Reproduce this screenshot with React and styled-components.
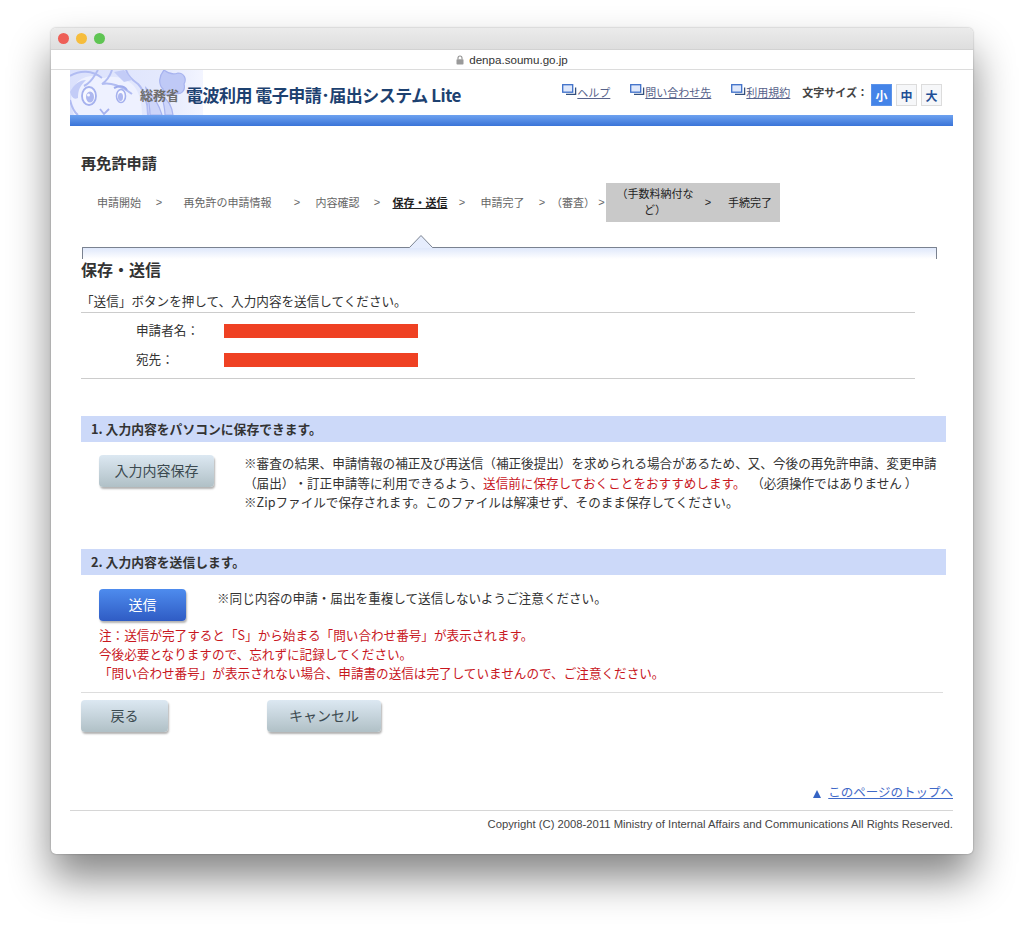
import React from 'react';
import styled, { createGlobalStyle } from 'styled-components';

const FONT = '"Noto Sans CJK JP", "Liberation Sans", sans-serif';

const GlobalStyle = createGlobalStyle`
    html, body {
        margin: 0;
        padding: 0;
        background: #fff;
    }
    body {
        font-family: ${FONT};
        color: #333;
        text-spacing-trim: space-all;
    }
`;

const steps = [
    { label: '申請開始', width: 62, sep: 18 },
    { label: '再免許の申請情報', width: 119, sep: 20 },
    { label: '内容確認', width: 61, sep: 18 },
    { label: '保存・送信', width: 68, sep: 16, current: true },
    { label: '申請完了', width: 65, sep: 14 },
    { label: '（審査）', width: 48, sep: 9 },
];

function LinkIcon() {
    return (
        <svg width="15" height="12" viewBox="0 0 15 12" fill="none">
            <rect x="0.7" y="0.7" width="10" height="7.500" fill="#dfe8fb" stroke="#3e6fc9" strokeWidth="1.3" />
            <path d="M4 10.400h9.600V3.400" stroke="#33507f" strokeWidth="1.3" />
        </svg>
    );
}

function LogoArt() {
    return (
        <LogoSvg viewBox="0 0 133 45" fill="none">
            <defs>
                <linearGradient id="logoBg" x1="0" x2="1" y1="0" y2="0">
                    <stop offset="0" stopColor="#dbe1fc" />
                    <stop offset="0.7" stopColor="#e4e9fd" />
                    <stop offset="1" stopColor="#f3f5ff" />
                </linearGradient>
            </defs>
            <rect width="133" height="45" fill="url(#logoBg)" />
            <path d="M4 45C0 34 0 22 6 14 12 6 24 4 34 8c10-3 22 0 30 8 6 8 8 18 8 29z" fill="#eef1ff" />
            <path d="M0 6c10-6 22-6 32 2M28 0c-4 6-6 12-14 16M42 0c-2 6-4 10-10 14 8-2 20 2 30 10M56 0c2 6 6 10 12 14 6 6 10 18 10 31M0 30c2 8 4 12 8 15" stroke="#b1bcf2" strokeWidth="2" />
            <path d="M0 22c4-8 10-12 16-12-6 6-8 10-8 18-4 2-6 0-8-6zM44 2l10-2 8 10-8 2z" fill="#c3ccf7" />
            <ellipse cx="19" cy="26" rx="7" ry="9" fill="#f7f8ff" stroke="#a5b1ee" strokeWidth="1.8" />
            <ellipse cx="20" cy="27" rx="4" ry="5.500" fill="#aeb8f0" />
            <circle cx="18.500" cy="25" r="1.500" fill="#f7f8ff" />
            <path d="M44 18c6-3 10-2 13 2" stroke="#9eabec" strokeWidth="2" />
            <ellipse cx="51" cy="26" rx="4.500" ry="6.500" fill="#f7f8ff" stroke="#a5b1ee" strokeWidth="1.6" />
            <ellipse cx="50.500" cy="27" rx="2.500" ry="4" fill="#aeb8f0" />
            <path d="M30 39l4 5 5-5" stroke="#a5b1ee" strokeWidth="1.800" />
            <path d="M94 0c5 4 9 5 14 3 6 0 9 6 6 11 2 7-3 11-9 9-5 5-12 2-12-4-5-5-4-13 1-19z" fill="#bfc9f6" stroke="#a7b3ef" strokeWidth="1.200" />
            <path d="M76 18c6 6 12 14 16 27H80c0-9-2-18-4-27zM92 26c6 4 10 10 11 19h-8c0-7-2-13-3-19z" fill="#cdd5f9" stroke="#a7b3ef" strokeWidth="1.200" />
        </LogoSvg>
    );
}

export default function App() {
    return (
        <Page>
            <GlobalStyle />
            <Browser>
                <TitleBar>
                    <Light color="#ee5f57" />
                    <Light color="#f6bd3c" />
                    <Light color="#5fc553" />
                </TitleBar>
                <UrlBar>
                    <svg width="8" height="10" viewBox="0 0 8 10" fill="none">
                        <path d="M2 4.500V3a2 2 0 0 1 4 0v1.500" stroke="#8f8f8f" strokeWidth="1.100" />
                        <rect x="0.5" y="4.200" width="7" height="5.300" rx="0.8" fill="#9a9a9a" />
                    </svg>
                    <span>denpa.soumu.go.jp</span>
                </UrlBar>
                <Content>
                    <Header>
                        <Logo>
                            <LogoArt />
                            <Ministry>総務省</Ministry>
                            <SystemName>電波利用 電子申請･届出システム Lite</SystemName>
                        </Logo>
                        <HeaderNav>
                            <NavLink $gap={20}><LinkIcon /><u>ヘルプ</u></NavLink>
                            <NavLink $gap={20}><LinkIcon /><u>問い合わせ先</u></NavLink>
                            <NavLink $gap={12}><LinkIcon /><u>利用規約</u></NavLink>
                            <SizeLabel>文字サイズ：</SizeLabel>
                            <SizeButton $active>小</SizeButton>
                            <SizeButton>中</SizeButton>
                            <SizeButton>大</SizeButton>
                        </HeaderNav>
                    </Header>
                    <BlueBar />

                    <Main>
                        <PageTitle>再免許申請</PageTitle>
                        <Steps>
                            {steps.map((s) => (
                                <React.Fragment key={s.label}>
                                    <Step $width={s.width} $current={s.current}>
                                        {s.current ? <u>{s.label}</u> : s.label}
                                    </Step>
                                    <Sep $width={s.sep}>&gt;</Sep>
                                </React.Fragment>
                            ))}
                            <PendingSteps>
                                <PendingLabel>（手数料納付など）</PendingLabel>
                                <Sep $width={28} $dark>&gt;</Sep>
                                <Step $width={56} $dark>手続完了</Step>
                            </PendingSteps>
                        </Steps>

                        <Marker>
                            <MarkerArrow width="30" height="14" viewBox="0 0 30 14" fill="none">
                                <path d="M0 13.500h3.500L15 1.500 26.500 13.500H30V14H0z" fill="#e6edfd" />
                                <path d="M0 13.500h3.500L15 1.500 26.500 13.500H30" stroke="#7a8290" strokeWidth="1" />
                            </MarkerArrow>
                        </Marker>

                        <SectionHeading>保存・送信</SectionHeading>
                        <Lead>「送信」ボタンを押して、入力内容を送信してください。</Lead>
                        <InfoBlock>
                            <InfoRow>
                                <InfoLabel>申請者名：</InfoLabel>
                                <Redacted />
                            </InfoRow>
                            <InfoRow>
                                <InfoLabel>宛先：</InfoLabel>
                                <Redacted />
                            </InfoRow>
                        </InfoBlock>

                        <Band $top={37}>1. 入力内容をパソコンに保存できます。</Band>
                        <SaveRow>
                            <Button $width={115}>入力内容保存</Button>
                            <SaveText>
                                ※審査の結果、申請情報の補正及び再送信（補正後提出）を求められる場合があるため、又、今後の再免許申請、変更申請（届出）・訂正申請等に利用できるよう、<Red>送信前に保存しておくことをおすすめします。</Red>&nbsp;&nbsp;（必須操作ではありません ）<br />
                                ※Zipファイルで保存されます。このファイルは解凍せず、そのまま保存してください。
                            </SaveText>
                        </SaveRow>

                        <Band $top={36}>2. 入力内容を送信します。</Band>
                        <SendRow>
                            <Button $width={87} $primary>送信</Button>
                            <SendText>※同じ内容の申請・届出を重複して送信しないようご注意ください。</SendText>
                        </SendRow>
                        <Warning>
                            注：送信が完了すると「S」から始まる「問い合わせ番号」が表示されます。<br />
                            今後必要となりますので、忘れずに記録してください。<br />
                            「問い合わせ番号」が表示されない場合、申請書の送信は完了していませんので、ご注意ください。
                        </Warning>

                        <Actions>
                            <Button $width={87}>戻る</Button>
                            <Button $width={114}>キャンセル</Button>
                        </Actions>
                    </Main>

                    <TopLink>
                        <TopTriangle />
                        <u>このページのトップへ</u>
                    </TopLink>
                    <Footer>Copyright (C) 2008-2011 Ministry of Internal Affairs and Communications All Rights Reserved.</Footer>
                </Content>
            </Browser>
        </Page>
    );
}

const Page = styled.div`
    width: 1024px;
    height: 927px;
    padding: 28px 51px 0;
    box-sizing: border-box;
    overflow: hidden;
`;

const Browser = styled.div`
    width: 922px;
    height: 826px;
    border-radius: 5px;
    background: #fff;
    box-shadow: 0 24px 42px rgba(0, 0, 0, 0.48), 0 0 2px rgba(0, 0, 0, 0.35);
    overflow: hidden;
    display: flex;
    flex-direction: column;
`;

const TitleBar = styled.div`
    height: 21px;
    flex: none;
    display: flex;
    align-items: center;
    gap: 7px;
    padding-left: 7px;
    background: linear-gradient(#ebebeb, #dedede);
    border-bottom: 1px solid #d2d2d2;
`;

const Light = styled.span`
    width: 11px;
    height: 11px;
    border-radius: 50%;
    background: ${(p) => p.color};
`;

const UrlBar = styled.div`
    height: 19px;
    flex: none;
    display: flex;
    align-items: center;
    justify-content: center;
    gap: 5px;
    font-family: "Liberation Sans", sans-serif;
    font-size: 11.600px;
    color: #333;
    border-bottom: 1px solid #dcdcdc;
`;

const Content = styled.div`
    flex: 1;
    padding: 0 20px 0 19px;
    display: flex;
    flex-direction: column;
`;

const Header = styled.div`
    height: 45px;
    flex: none;
    display: flex;
    justify-content: space-between;
`;

const Logo = styled.div`
    position: relative;
    width: 400px;
    display: flex;
    align-items: center;
    padding: 4px 0 0 70px;
    box-sizing: border-box;
`;

const LogoSvg = styled.svg`
    position: absolute;
    left: 0;
    top: 0;
    width: 133px;
    height: 45px;
`;

const Ministry = styled.span`
    position: relative;
    font-size: 13px;
    font-weight: 700;
    color: #6d6d6d;
    width: 46px;
    white-space: nowrap;
`;

const SystemName = styled.span`
    position: relative;
    font-size: 17px;
    font-weight: 700;
    letter-spacing: -0.500px;
    color: #1d4170;
    white-space: nowrap;
`;

const HeaderNav = styled.div`
    display: flex;
    align-items: flex-start;
    padding: 13px 7px 0 0;
`;

const NavLink = styled.a`
    display: flex;
    align-items: flex-start;
    font-size: 11px;
    line-height: 18px;
    color: #56628a;
    margin-right: ${(p) => p.$gap}px;
    white-space: nowrap;
    svg {
        margin-top: 1px;
    }
`;

const SizeLabel = styled.span`
    font-size: 11px;
    font-weight: 700;
    line-height: 18px;
    color: #444;
    margin-right: 3px;
    white-space: nowrap;
`;

const SizeButton = styled.span`
    width: 21px;
    height: 22px;
    margin: 1px 4px 0 0;
    box-sizing: border-box;
    display: flex;
    align-items: center;
    justify-content: center;
    font-size: 12px;
    font-weight: 700;
    color: ${(p) => (p.$active ? '#fff' : '#1f4f96')};
    background: ${(p) => (p.$active ? '#4484e8' : '#f6f7f9')};
    border: 1px solid ${(p) => (p.$active ? '#5b93ea' : '#dcdcdc')};
`;

const BlueBar = styled.div`
    height: 11px;
    flex: none;
    background: linear-gradient(#6ea2f0, #3a74d8);
`;

const Main = styled.div`
    padding: 0 7px 0 11px;
`;

const PageTitle = styled.h1`
    margin: 26px 0 0;
    font-size: 15.200px;
    line-height: 20px;
    font-weight: 700;
    color: #333;
`;

const Steps = styled.div`
    display: flex;
    align-items: center;
    height: 39px;
    margin-top: 11px;
    padding-left: 7px;
`;

const Step = styled.span`
    width: ${(p) => p.$width}px;
    flex: none;
    margin-bottom: 2px;
    text-align: center;
    font-size: 11px;
    white-space: nowrap;
    font-weight: ${(p) => (p.$current ? 700 : 400)};
    color: ${(p) => (p.$current || p.$dark ? '#222' : '#666')};
`;

const Sep = styled.span`
    width: ${(p) => p.$width}px;
    flex: none;
    margin-bottom: 2px;
    text-align: center;
    font-family: "Liberation Sans", sans-serif;
    font-size: 11px;
    color: ${(p) => (p.$dark ? '#222' : '#666')};
`;

const PendingSteps = styled.div`
    height: 39px;
    width: 174px;
    flex: none;
    display: flex;
    align-items: center;
    background: #c9c9c9;
`;

const PendingLabel = styled.span`
    width: 78px;
    margin: 0 0 3px 10px;
    flex: none;
    text-align: center;
    font-size: 11px;
    line-height: 16px;
    color: #222;
`;

const Marker = styled.div`
    position: relative;
    height: 11px;
    margin: 25px 9px 0 1px;
    border: 1px solid #7a8290;
    border-bottom: 0;
    border-radius: 1px 1px 0 0;
    background: linear-gradient(#dfe8fb, #fff);
`;

const MarkerArrow = styled.svg`
    position: absolute;
    left: 323px;
    top: -14px;
`;

const SectionHeading = styled.h2`
    margin: 0;
    font-size: 16px;
    line-height: 20px;
    font-weight: 700;
    color: #333;
`;

const Lead = styled.p`
    margin: 12px 31px 0 0;
    height: 21px;
    font-size: 12.600px;
    line-height: 20px;
    color: #333;
    border-bottom: 1px solid #ccc;
`;

const InfoBlock = styled.div`
    margin-right: 31px;
    padding-top: 3px;
    height: 62px;
    border-bottom: 1px solid #ccc;
`;

const InfoRow = styled.div`
    display: flex;
    align-items: center;
    height: 29px;
    padding-left: 55px;
`;

const InfoLabel = styled.span`
    width: 88px;
    margin-bottom: 2px;
    font-size: 12.600px;
    color: #333;
`;

const Redacted = styled.span`
    width: 194px;
    height: 14px;
    background: #ef4123;
`;

const Band = styled.h3`
    margin: ${(p) => p.$top}px 0 0;
    height: 26px;
    line-height: 25px;
    padding-left: 10px;
    font-size: 12.800px;
    font-weight: 700;
    color: #333;
    background: #ccd9f9;
`;

const SaveRow = styled.div`
    display: flex;
    gap: 30px;
    padding: 11px 8px 0 18px;
    height: 71px;
    box-sizing: border-box;
    button {
        margin-top: 2px;
    }
`;

const Button = styled.button`
    width: ${(p) => p.$width}px;
    height: 32px;
    flex: none;
    border: 0;
    border-radius: 4px;
    padding: 0 0 2px;
    font-family: ${FONT};
    font-size: 14px;
    color: ${(p) => (p.$primary ? '#fff' : '#3c4a50')};
    background: ${(p) => (p.$primary
        ? 'linear-gradient(#4e8cee, #2f5cc4)'
        : 'linear-gradient(#dce8f2, #b0c0c6)')};
    box-shadow: 1px 2px 2px rgba(0, 0, 0, 0.3);
`;

const SaveText = styled.div`
    font-size: 12.600px;
    line-height: 19.500px;
    color: #333;
`;

const Red = styled.span`
    color: #c8171e;
`;

const SendRow = styled.div`
    display: flex;
    gap: 31px;
    padding: 14px 0 0 18px;
`;

const SendText = styled.div`
    margin-top: -1px;
    font-size: 12.600px;
    line-height: 19px;
    color: #333;
`;

const Warning = styled.div`
    margin: 4px 3px 0 0;
    padding: 0 0 10px 18px;
    font-size: 12.600px;
    line-height: 19px;
    color: #c8171e;
    border-bottom: 1px solid #ddd;
`;

const Actions = styled.div`
    display: flex;
    gap: 99px;
    padding-top: 7px;
`;

const TopLink = styled.div`
    margin-top: 50px;
    display: flex;
    justify-content: flex-end;
    align-items: center;
    gap: 7px;
    font-size: 12.500px;
    line-height: 20px;
    color: #3f69c8;
`;

const TopTriangle = styled.span`
    width: 0;
    height: 0;
    margin-top: 3px;
    border-left: 4.500px solid transparent;
    border-right: 4.500px solid transparent;
    border-bottom: 8px solid #3564c4;
`;

const Footer = styled.div`
    margin-top: 8px;
    padding-top: 5px;
    border-top: 1px solid #d6d6d6;
    text-align: right;
    font-family: "Liberation Sans", sans-serif;
    font-size: 11.250px;
    line-height: 16px;
    color: #444;
`;
